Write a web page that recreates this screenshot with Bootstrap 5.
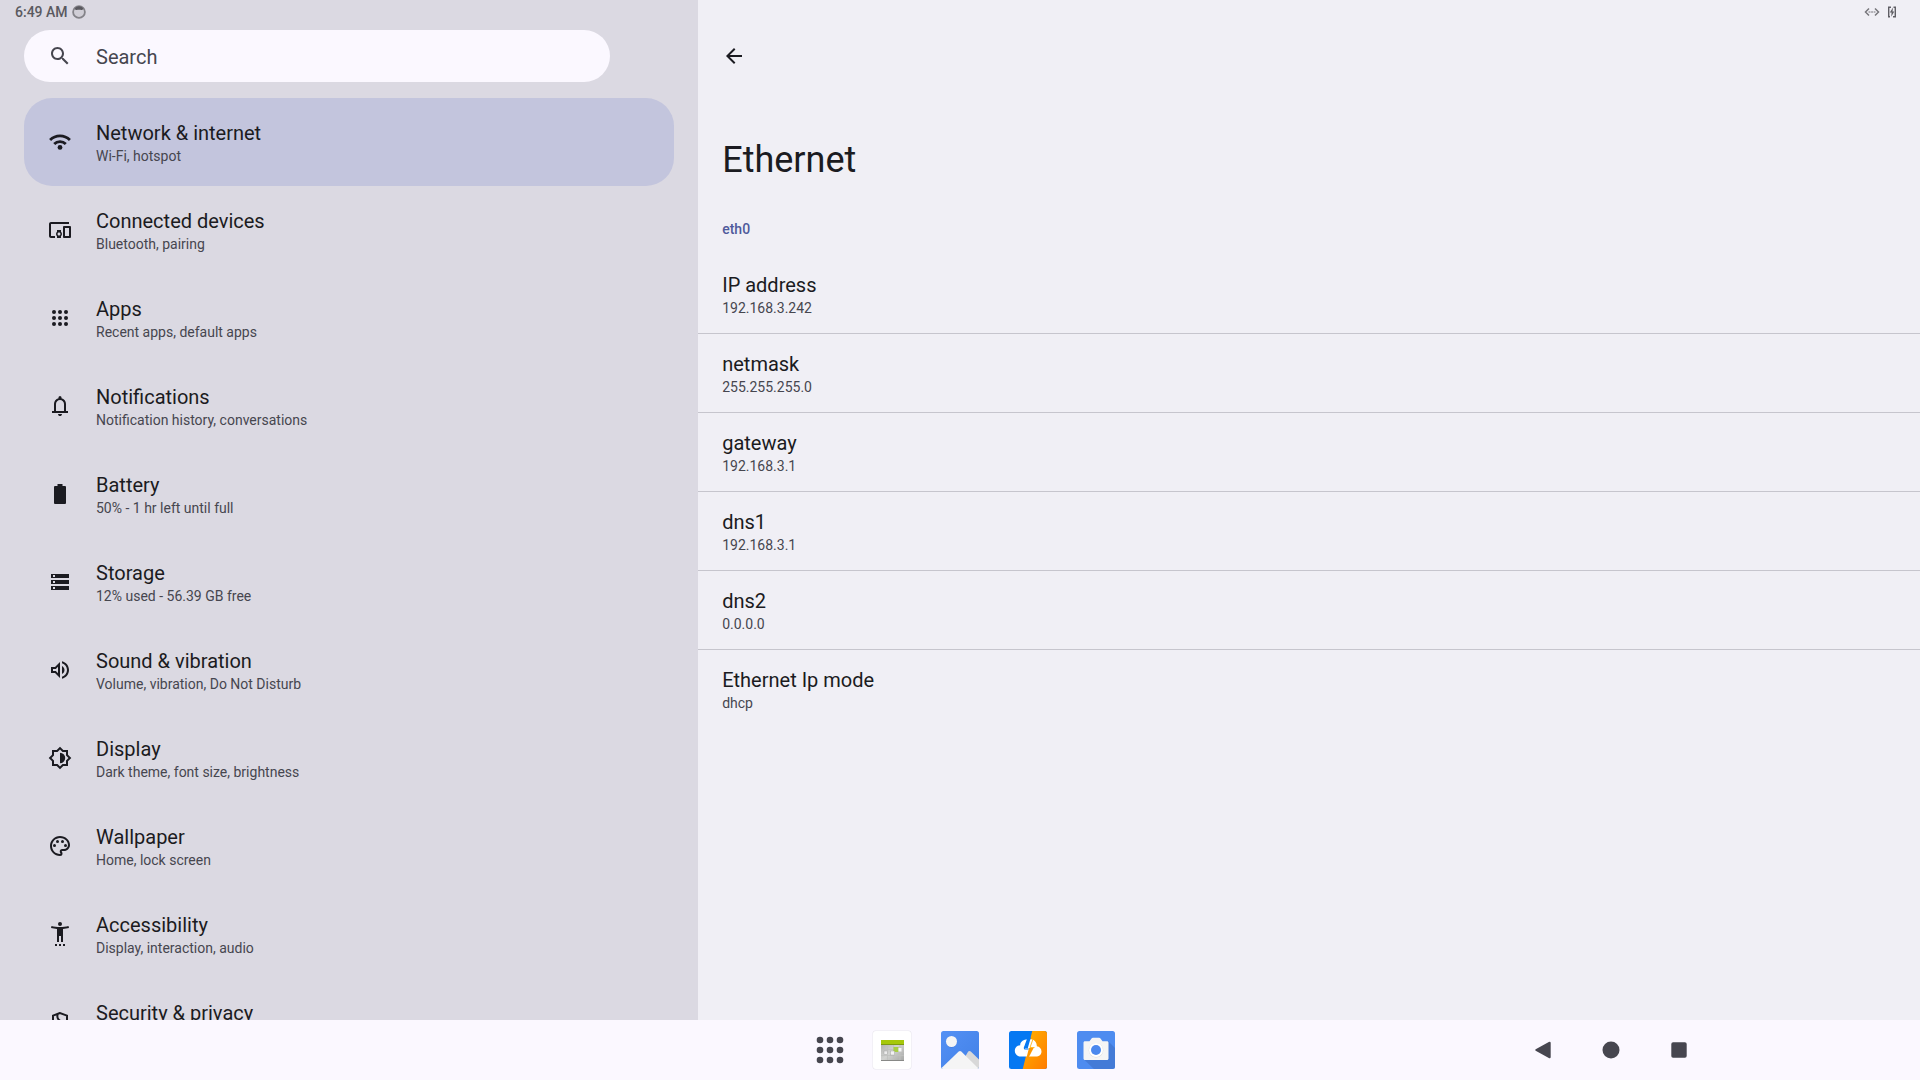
<!DOCTYPE html>
<html lang="en">
<head>
<meta charset="utf-8">
<meta name="viewport" content="width=device-width, initial-scale=1">
<title>Settings - Ethernet</title>
<link href="https://cdn.jsdelivr.net/npm/bootstrap@5.3.0/dist/css/bootstrap.min.css" rel="stylesheet">
<style>
  :root { --ink: #1b1b21; --ink-soft: #46464f; --bar: #fbf8ff; --side: #dbd9e2; --pane: #f0eff5; --accent: #4f5a9b; }
  body { font-family: Roboto, "Noto Sans", sans-serif; color: var(--ink); background: var(--bar); }
  .side-pane { flex: 4 1 0; background: var(--side); }
  .detail-pane { flex: 7 1 0; background: var(--pane); }
  .status-strip { height: 24px; font-size: 14px; line-height: 20px; color: #5a595f; }
  .status-left { padding-left: 15px; gap: 4px; }
  .status-right { padding-right: 23px; gap: 7px; }
  .search-pill { height: 52px; margin: 6px 88px 16px 24px; padding-left: 24px; gap: 24px; background: var(--bar); color: var(--ink-soft); }
  .search-pill input { height: 40px; font-size: 20px; line-height: 26px; padding: 2px 0 0; color: var(--ink-soft); }
  .search-pill input::placeholder { color: var(--ink-soft); opacity: 1; }
  .menu-rows { padding: 0 24px; }
  .menu-row { height: 88px; padding-left: 24px; gap: 24px; border-radius: 28px; color: var(--ink); }
  .menu-row.current { background: #c3c5dd; }
  .menu-text { min-height: 48px; padding-top: 2px; }
  .row-title { font-size: 20px; line-height: 26px; }
  .row-note { font-size: 14px; line-height: 20px; color: var(--ink-soft); }
  .glyph { width: 24px; height: 24px; fill: currentColor; display: block; flex: none; }
  .back-btn { margin: 20px 0 0 24px; color: var(--ink); }
  .detail-title { font-size: 36px; line-height: 44px; font-weight: 400; margin: 70px 24px 0; }
  .group-name { font-size: 14px; line-height: 20px; font-weight: 500; color: var(--accent); margin: 37px 24px 16px; }
  .info-row { padding: 17px 24px 15px; border-bottom: 1px solid #c6c5cd; }
  .info-row:last-child { border-bottom: 0; }
  .task-strip { display: grid; grid-template-columns: 1fr auto 1fr; align-items: center; height: 60px; padding-left: 12px; background: var(--bar); color: var(--ink-soft); }
  .task-apps { grid-column: 2; }
  .task-nav { justify-self: end; margin-right: 207px; }
  .task-btn { width: 68px; height: 60px; color: inherit; }
  .task-btn.all-apps { width: 56px; }
  .app-art { width: 40px; height: 40px; display: block; }
</style>
<script src="https://cdn.jsdelivr.net/npm/bootstrap@5.3.0/dist/js/bootstrap.bundle.min.js"></script>
</head>
<body class="vh-100 d-flex flex-column overflow-hidden">
<main class="d-flex flex-grow-1 overflow-hidden">

  <section class="side-pane overflow-hidden">
    <div class="status-strip status-left d-flex align-items-center">
      <time class="fw-medium">6:49 AM</time>
      <svg width="14" height="14" viewBox="0 0 14 14"><circle cx="7" cy="7" r="5.900" fill="#d0ced6" stroke="#848389" stroke-width="1.800"/><path d="M2.500 4C3.500 2 5 1.200 7 1.200S10.500 2 11.500 4C10 5.400 9 4.800 7 4.800S4 5.400 2.500 4z" fill="#5a595f"/></svg>
    </div>
    <form class="search-pill rounded-pill d-flex align-items-center" role="search">
      <label for="q"><span class="visually-hidden">Search settings</span>
        <svg class="glyph" viewBox="0 0 24 24"><path d="M15.500 14h-.79l-.28-.27C15.410 12.590 16 11.110 16 9.500 16 5.910 13.090 3 9.500 3S3 5.910 3 9.500 5.910 16 9.500 16c1.610 0 3.090-.59 4.230-1.570l.27.28v.79l5 4.990L20.490 19l-4.990-5zm-6 0C7.010 14 5 11.990 5 9.500S7.010 5 9.500 5 14 7.010 14 9.500 11.990 14 9.500 14z"/></svg>
      </label>
      <input id="q" type="search" class="form-control border-0 bg-transparent shadow-none" placeholder="Search">
    </form>

    <nav class="menu-rows" aria-label="Settings">
      <a href="#network" class="menu-row current d-flex align-items-center text-decoration-none" aria-current="page">
        <svg class="glyph" viewBox="0 0 24 24"><g fill="none" stroke="currentColor" stroke-width="2.800"><path d="M2.100 10a14 14 0 0 1 19.800 0"/><path d="M6.200 14.100a8.200 8.200 0 0 1 11.600 0"/></g><circle cx="12" cy="17.400" r="2.400"/></svg>
        <span class="menu-text"><span class="row-title d-block">Network &amp; internet</span><span class="row-note d-block">Wi-Fi, hotspot</span></span>
      </a>
      <a href="#devices" class="menu-row d-flex align-items-center text-decoration-none">
        <svg class="glyph" viewBox="0 0 24 24"><path d="M3 6h18V4H3c-1.100 0-2 .9-2 2v12c0 1.100.9 2 2 2h4v-2H3V6zm10 6H9v1.780c-.61.55-1 1.330-1 2.220s.39 1.670 1 2.220V20h4v-1.780c.61-.55 1-1.340 1-2.220s-.39-1.670-1-2.220V12zm-2 5.500c-.83 0-1.500-.67-1.500-1.500s.67-1.500 1.500-1.500 1.500.67 1.500 1.500-.67 1.500-1.500 1.500zM22 8h-6c-.5 0-1 .5-1 1v10c0 .5.5 1 1 1h6c.5 0 1-.5 1-1V9c0-.5-.5-1-1-1zm-1 10h-4v-8h4v8z"/></svg>
        <span class="menu-text"><span class="row-title d-block">Connected devices</span><span class="row-note d-block">Bluetooth, pairing</span></span>
      </a>
      <a href="#apps" class="menu-row d-flex align-items-center text-decoration-none">
        <svg class="glyph" viewBox="0 0 24 24"><circle cx="6" cy="6" r="2"/><circle cx="12" cy="6" r="2"/><circle cx="18" cy="6" r="2"/><circle cx="6" cy="12" r="2"/><circle cx="12" cy="12" r="2"/><circle cx="18" cy="12" r="2"/><circle cx="6" cy="18" r="2"/><circle cx="12" cy="18" r="2"/><circle cx="18" cy="18" r="2"/></svg>
        <span class="menu-text"><span class="row-title d-block">Apps</span><span class="row-note d-block">Recent apps, default apps</span></span>
      </a>
      <a href="#notifications" class="menu-row d-flex align-items-center text-decoration-none">
        <svg class="glyph" viewBox="0 0 24 24"><path d="M4 19v-2h2v-7q0-2.075 1.250-3.687Q8.500 4.700 10.500 4.200v-.7q0-.625.438-1.062Q11.375 2 12 2t1.063.438Q13.500 2.875 13.500 3.500v.7q2 .5 3.250 2.113Q18 7.925 18 10v7h2v2Zm8 3q-.825 0-1.412-.587Q10 20.825 10 20h4q0 .825-.587 1.413Q12.825 22 12 22Zm-4-5h8v-7q0-1.650-1.175-2.825Q13.650 6 12 6q-1.650 0-2.825 1.175Q8 8.350 8 10Z"/></svg>
        <span class="menu-text"><span class="row-title d-block">Notifications</span><span class="row-note d-block">Notification history, conversations</span></span>
      </a>
      <a href="#battery" class="menu-row d-flex align-items-center text-decoration-none">
        <svg class="glyph" viewBox="0 0 24 24"><path d="M9.500 2h5v2H17a1 1 0 0 1 1 1v16a1 1 0 0 1-1 1H7a1 1 0 0 1-1-1V5a1 1 0 0 1 1-1h2.500z"/></svg>
        <span class="menu-text"><span class="row-title d-block">Battery</span><span class="row-note d-block">50% - 1 hr left until full</span></span>
      </a>
      <a href="#storage" class="menu-row d-flex align-items-center text-decoration-none">
        <svg class="glyph" viewBox="0 0 24 24"><path fill-rule="evenodd" d="M3 4h18v4H3zm2 1v2h2V5zM3 10h18v4H3zm2 1v2h2v-2zM3 16h18v4H3zm2 1v2h2v-2z"/></svg>
        <span class="menu-text"><span class="row-title d-block">Storage</span><span class="row-note d-block">12% used - 56.39 GB free</span></span>
      </a>
      <a href="#sound" class="menu-row d-flex align-items-center text-decoration-none">
        <svg class="glyph" viewBox="0 0 24 24"><path d="M3 9v6h4l5 5V4L7 9H3zm7-.17v6.340L7.830 13H5v-2h2.830L10 8.830zM16.500 12c0-1.770-1.020-3.290-2.500-4.030v8.050c1.480-.73 2.500-2.250 2.500-4.020zM14 3.230v2.060c2.890.86 5 3.540 5 6.710s-2.110 5.850-5 6.710v2.060c4.010-.91 7-4.490 7-8.770s-2.990-7.860-7-8.770z"/></svg>
        <span class="menu-text"><span class="row-title d-block">Sound &amp; vibration</span><span class="row-note d-block">Volume, vibration, Do Not Disturb</span></span>
      </a>
      <a href="#display" class="menu-row d-flex align-items-center text-decoration-none">
        <svg class="glyph" viewBox="0 0 24 24"><path d="M20 8.690V4h-4.690L12 .69 8.690 4H4v4.690L.69 12 4 15.310V20h4.690L12 23.310 15.310 20H20v-4.690L23.310 12 20 8.690zm-2 5.790V18h-3.520L12 20.480 9.520 18H6v-3.520L3.520 12 6 9.520V6h3.520L12 3.520 14.480 6H18v3.520L20.480 12 18 14.480zM12 6.800v10.400a5.200 5.200 0 0 0 0-10.400z"/></svg>
        <span class="menu-text"><span class="row-title d-block">Display</span><span class="row-note d-block">Dark theme, font size, brightness</span></span>
      </a>
      <a href="#wallpaper" class="menu-row d-flex align-items-center text-decoration-none">
        <svg class="glyph" viewBox="0 0 24 24"><path d="M12 22C6.490 22 2 17.510 2 12S6.490 2 12 2s10 4.040 10 9c0 3.310-2.690 6-6 6h-1.770c-.28 0-.5.22-.5.5 0 .12.05.23.13.33.41.47.64 1.060.64 1.670A2.500 2.500 0 0 1 12 22zm0-18c-4.410 0-8 3.590-8 8s3.590 8 8 8c.28 0 .5-.22.5-.5a.54.54 0 0 0-.14-.35c-.41-.46-.63-1.050-.63-1.650a2.500 2.500 0 0 1 2.500-2.500H16c2.210 0 4-1.790 4-4 0-3.860-3.590-7-8-7z"/><circle cx="6.500" cy="11.500" r="1.500"/><circle cx="9.500" cy="7.500" r="1.500"/><circle cx="14.500" cy="7.500" r="1.500"/><circle cx="17.500" cy="11.500" r="1.500"/></svg>
        <span class="menu-text"><span class="row-title d-block">Wallpaper</span><span class="row-note d-block">Home, lock screen</span></span>
      </a>
      <a href="#accessibility" class="menu-row d-flex align-items-center text-decoration-none">
        <svg class="glyph" viewBox="0 0 24 24"><circle cx="12" cy="2" r="2"/><path d="M20.500 4c-2.610.7-5.670 1-8.500 1s-5.890-.3-8.500-1L3 6c1.860.5 4 .83 6 1v13h2v-6h2v6h2V7c2-.17 4.140-.5 6-1l-.5-2zM7 22h2v2H7zM11 22h2v2h-2zM15 22h2v2h-2z"/></svg>
        <span class="menu-text"><span class="row-title d-block">Accessibility</span><span class="row-note d-block">Display, interaction, audio</span></span>
      </a>
      <a href="#security" class="menu-row d-flex align-items-center text-decoration-none">
        <svg class="glyph" viewBox="0 0 24 24"><path fill="none" stroke="currentColor" stroke-width="2" d="M12 3L5 5.600V11c0 4.500 3 8.500 7 9.900 4-1.400 7-5.400 7-9.900V5.600zM9.600 4.500C8.700 8 10.600 10.800 14 11.500"/></svg>
        <span class="menu-text"><span class="row-title d-block">Security &amp; privacy</span></span>
      </a>
    </nav>
  </section>

  <section class="detail-pane overflow-hidden">
    <div class="status-strip status-right d-flex align-items-center justify-content-end">
      <svg width="16" height="12" viewBox="0 0 16 12" fill="none" stroke="#77767c" stroke-width="1.500"><path d="M5 2.500L1.500 6 5 9.500M11 2.500L14.500 6 11 9.500"/><path d="M4.500 6h7" stroke-width="1.200" stroke-dasharray="2 .6"/></svg>
      <svg width="10" height="14" viewBox="0 0 10 14"><path d="M4 2.200H1.700v9.600H3M6.500 2.200H8.300v9.600H6" fill="none" stroke="#5f5e64" stroke-width="1.400"/><path d="M6 2.600L2.800 7.600H4.600L4.200 11.800 7.300 6.400H5.500z" fill="#5f5e64"/></svg>
    </div>
    <button type="button" class="back-btn btn border-0 p-0 d-block" aria-label="Back">
      <svg class="glyph" viewBox="0 0 24 24"><path d="M20 11H7.830l5.590-5.590L12 4l-8 8 8 8 1.410-1.410L7.830 13H20v-2z"/></svg>
    </button>
    <h1 class="detail-title">Ethernet</h1>
    <h2 class="group-name">eth0</h2>
    <dl class="mb-0">
      <div class="info-row"><dt class="row-title fw-normal">IP address</dt><dd class="row-note mb-0">192.168.3.242</dd></div>
      <div class="info-row"><dt class="row-title fw-normal">netmask</dt><dd class="row-note mb-0">255.255.255.0</dd></div>
      <div class="info-row"><dt class="row-title fw-normal">gateway</dt><dd class="row-note mb-0">192.168.3.1</dd></div>
      <div class="info-row"><dt class="row-title fw-normal">dns1</dt><dd class="row-note mb-0">192.168.3.1</dd></div>
      <div class="info-row"><dt class="row-title fw-normal">dns2</dt><dd class="row-note mb-0">0.0.0.0</dd></div>
      <div class="info-row"><dt class="row-title fw-normal">Ethernet Ip mode</dt><dd class="row-note mb-0">dhcp</dd></div>
    </dl>
  </section>
</main>

<footer class="task-strip flex-shrink-0">
  <div class="task-apps d-flex">
    <button type="button" class="task-btn all-apps btn border-0 p-0 d-flex align-items-center justify-content-center" aria-label="All apps">
      <svg width="28" height="28" viewBox="0 0 28 28" fill="currentColor"><circle cx="4" cy="4" r="3.300"/><circle cx="14" cy="4" r="3.300"/><circle cx="24" cy="4" r="3.300"/><circle cx="4" cy="14" r="3.300"/><circle cx="14" cy="14" r="3.300"/><circle cx="24" cy="14" r="3.300"/><circle cx="4" cy="24" r="3.300"/><circle cx="14" cy="24" r="3.300"/><circle cx="24" cy="24" r="3.300"/></svg>
    </button>
    <button type="button" class="task-btn btn border-0 p-0 d-flex align-items-center justify-content-center" aria-label="Calendar">
      <svg class="app-art" viewBox="0 0 40 40">
        <defs><linearGradient id="calg" x1="0" y1="0" x2="1" y2="1"><stop offset="0" stop-color="#a9aaa8"/><stop offset=".5" stop-color="#d2d3d1"/><stop offset="1" stop-color="#a6a7a5"/></linearGradient></defs>
        <rect x=".5" y=".5" width="39" height="39" rx="3" fill="#e9e7ee"/><rect x="1" y="1" width="38" height="38" rx="3" fill="#fff"/>
        <rect x="9" y="10" width="23" height="21" fill="url(#calg)"/><rect x="9" y="10" width="23" height="4" fill="#a6c80a"/><path d="M9 14h23v1H9z" fill="#7d9a12"/>
        <path d="M9 19.500h23M9 25.500h23M15.500 15v15M21.500 15v15M28 15v15" stroke="#bfc0be" stroke-width=".8"/>
        <rect x="21.500" y="17" width="5" height="5" fill="#a8cf45"/><rect x="12" y="21" width="3.500" height="3.500" fill="#ececec" stroke="#999" stroke-width=".4"/><rect x="18.500" y="21" width="4" height="4" fill="#f2f2f2" stroke="#999" stroke-width=".4"/><rect x="26.500" y="18" width="3" height="3.500" fill="#f6f6f6"/><path d="M9 30.500h23" stroke="#888987"/>
      </svg>
    </button>
    <button type="button" class="task-btn btn border-0 p-0 d-flex align-items-center justify-content-center" aria-label="Gallery">
      <svg class="app-art" viewBox="0 0 40 40">
        <defs><clipPath id="galc"><rect x="1" y="1" width="38" height="38" rx="2.500"/></clipPath><linearGradient id="galg" x1="0" y1="0" x2="1" y2="1"><stop offset="0" stop-color="#5491f5"/><stop offset="1" stop-color="#4180e6"/></linearGradient></defs>
        <g clip-path="url(#galc)"><rect width="40" height="40" fill="url(#galg)"/><path d="M18 39L28.200 21.600q1.300-1.300 2.600 0L40 30.500V40z" fill="#d8d8d8"/><path d="M0 39.500L18.700 21.600q1.300-1.200 2.600 0L39.500 39.500z" fill="#f5f5f5"/><circle cx="11.500" cy="12.200" r="5.500" fill="#3468c8" opacity=".4"/><circle cx="11.500" cy="11.500" r="5.500" fill="#f5f5f5"/></g>
      </svg>
    </button>
    <button type="button" class="task-btn btn border-0 p-0 d-flex align-items-center justify-content-center" aria-label="Cloud transfer">
      <svg class="app-art" viewBox="0 0 40 40">
        <defs><clipPath id="clc"><rect x="1" y="1" width="38" height="38" rx="2.500"/></clipPath><linearGradient id="clo" x1="0" y1="0" x2="1" y2="1"><stop offset="0" stop-color="#ffb400"/><stop offset="1" stop-color="#ff7a00"/></linearGradient></defs>
        <g clip-path="url(#clc)"><rect width="40" height="40" fill="#0578f2"/><path d="M24.500 0H40v40H14.500z" fill="url(#clo)"/>
        <path d="M18 9.600C14.500 10 12.300 12.400 12.200 15.200 9 15.400 6.800 17.700 6.800 20.700c0 3.300 2.600 5.900 6 5.900h14.900c3.500 0 5.800-2.300 5.800-5.200 0-2.700-2-4.800-4.600-5.100C28.800 12.500 26.500 9.800 23.500 9.300z" fill="#fff"/>
        <path d="M22.800 7.500h-3.300L15.600 18.200h4.200L17 28z" fill="#0578f2"/><path d="M18 29.500l3-11.500h4.600l-5.200 10z" fill="#ff9800"/><path d="M20.500 8L16.300 19h4.300" fill="none" stroke="#0578f2"/><path d="M25.200 8.500L22 17.500h4.500" fill="none" stroke="#ffab00" stroke-width=".8"/></g>
      </svg>
    </button>
    <button type="button" class="task-btn btn border-0 p-0 d-flex align-items-center justify-content-center" aria-label="Camera">
      <svg class="app-art" viewBox="0 0 40 40">
        <defs><clipPath id="cac"><rect x="1" y="1" width="38" height="38" rx="2.500"/></clipPath></defs>
        <g clip-path="url(#cac)"><rect width="40" height="40" fill="#4e8cf0"/><path d="M32 11l9 9v20H19L8 29.500z" fill="#4176cf" opacity=".75"/><path d="M9 11.200h4.500l2-2.700c.4-.5.800-.7 1.400-.7h6.200c.6 0 1 .2 1.400.7l2 2.700H31c1 0 1.500.6 1.500 1.500v15.800c0 .9-.6 1.500-1.500 1.500H9c-.9 0-1.500-.6-1.500-1.500V12.700c0-.9.6-1.500 1.500-1.500z" fill="#f5f5f5"/><circle cx="20" cy="20.300" r="7.300" fill="#dcdcdc"/><circle cx="20" cy="20" r="7" fill="#fff"/><circle cx="20" cy="20" r="5" fill="#4b89ee"/></g>
      </svg>
    </button>
  </div>
  <div class="task-nav d-flex">
    <button type="button" class="task-btn btn border-0 p-0 d-flex align-items-center justify-content-center" aria-label="Back">
      <svg width="18" height="18" viewBox="0 0 18 18" fill="currentColor"><path d="M1.700 8.200L14.800.9q1.900-.7 1.900 1v14.200q0 1.700-1.900 1L1.700 9.800q-1.100-.8 0-1.600z"/></svg>
    </button>
    <button type="button" class="task-btn btn border-0 p-0 d-flex align-items-center justify-content-center" aria-label="Home">
      <svg width="18" height="18" viewBox="0 0 18 18" fill="currentColor"><circle cx="9" cy="9" r="8.500"/></svg>
    </button>
    <button type="button" class="task-btn btn border-0 p-0 d-flex align-items-center justify-content-center" aria-label="Recent apps">
      <svg width="18" height="18" viewBox="0 0 18 18" fill="currentColor"><rect x="1.300" y="1.300" width="15.400" height="15.400" rx="1.800"/></svg>
    </button>
  </div>
</footer>
</body>
</html>
